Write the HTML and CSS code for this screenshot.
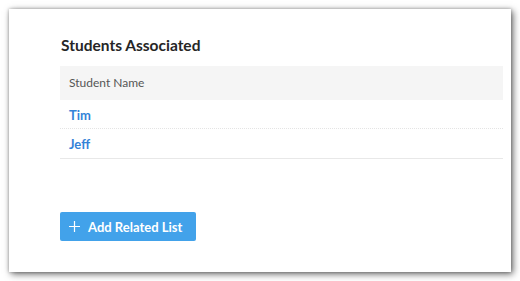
FILE: index.html
```html
<!DOCTYPE html>
<html lang="en">
<head>
  <meta charset="UTF-8">
  <title>Students Associated</title>
  <link rel="stylesheet" href="styles.css">
</head>
<body>

  <!-- Related list card -->
  <div class="card">
    <h2 class="list-title">Students Associated</h2>

    <div class="related-table">
      <div class="table-head">Student Name</div>
      <div class="table-row"><a href="#">Tim</a></div>
      <div class="table-row last"><a href="#">Jeff</a></div>
    </div>

    <button class="add-btn">
      <svg class="plus" width="11" height="11" viewBox="0 0 11 11">
        <path d="M5.5 0v11M0 5.5h11" stroke="#fff" stroke-width="1.2" fill="none"/>
      </svg>
      Add Related List
    </button>
  </div>

</body>
</html>
```

FILE: styles.css
```css
* {
  box-sizing: border-box;
  margin: 0;
  padding: 0;
}

body, html {
  height: 100%;
  background: #fff;
  font-family: "Lato", "Open Sans", sans-serif;
}

.card {
  margin: 9px;
  width: 502px;
  height: 263px;
  background: #fff;
  padding: 26px 8px 0 51px;
  box-shadow: 2px 2px 7px rgba(0, 0, 0, 0.6), 0 0 3px rgba(0, 0, 0, 0.25);
}

.list-title {
  font-size: 15.5px;
  font-weight: 700;
  line-height: 21px;
  color: #262626;
  margin-bottom: 10px;
  padding-left: 1px;
}

.related-table {
  width: 443px;
}

.table-head {
  height: 34px;
  line-height: 34px;
  padding-left: 9px;
  background: #f5f5f5;
  font-size: 12px;
  color: #555;
}

.table-row {
  height: 29px;
  line-height: 27px;
  padding-left: 9px;
  border-bottom: 1px dotted #e4e4e4;
}

.table-row.last {
  height: 30px;
  line-height: 28px;
  border-bottom: 1px solid #e8e8e8;
}

.table-row a {
  font-size: 13px;
  font-weight: 700;
  color: #3483d8;
  text-decoration: none;
}

.add-btn {
  margin-top: 53px;
  width: 136px;
  height: 29px;
  display: flex;
  align-items: center;
  gap: 8px;
  padding-left: 9px;
  background: #42a2ea;
  border: none;
  border-radius: 2px;
  color: #fff;
  font-family: "Lato", sans-serif;
  font-size: 13px;
  font-weight: 700;
  cursor: pointer;
}

.plus {
  flex-shrink: 0;
}
```
